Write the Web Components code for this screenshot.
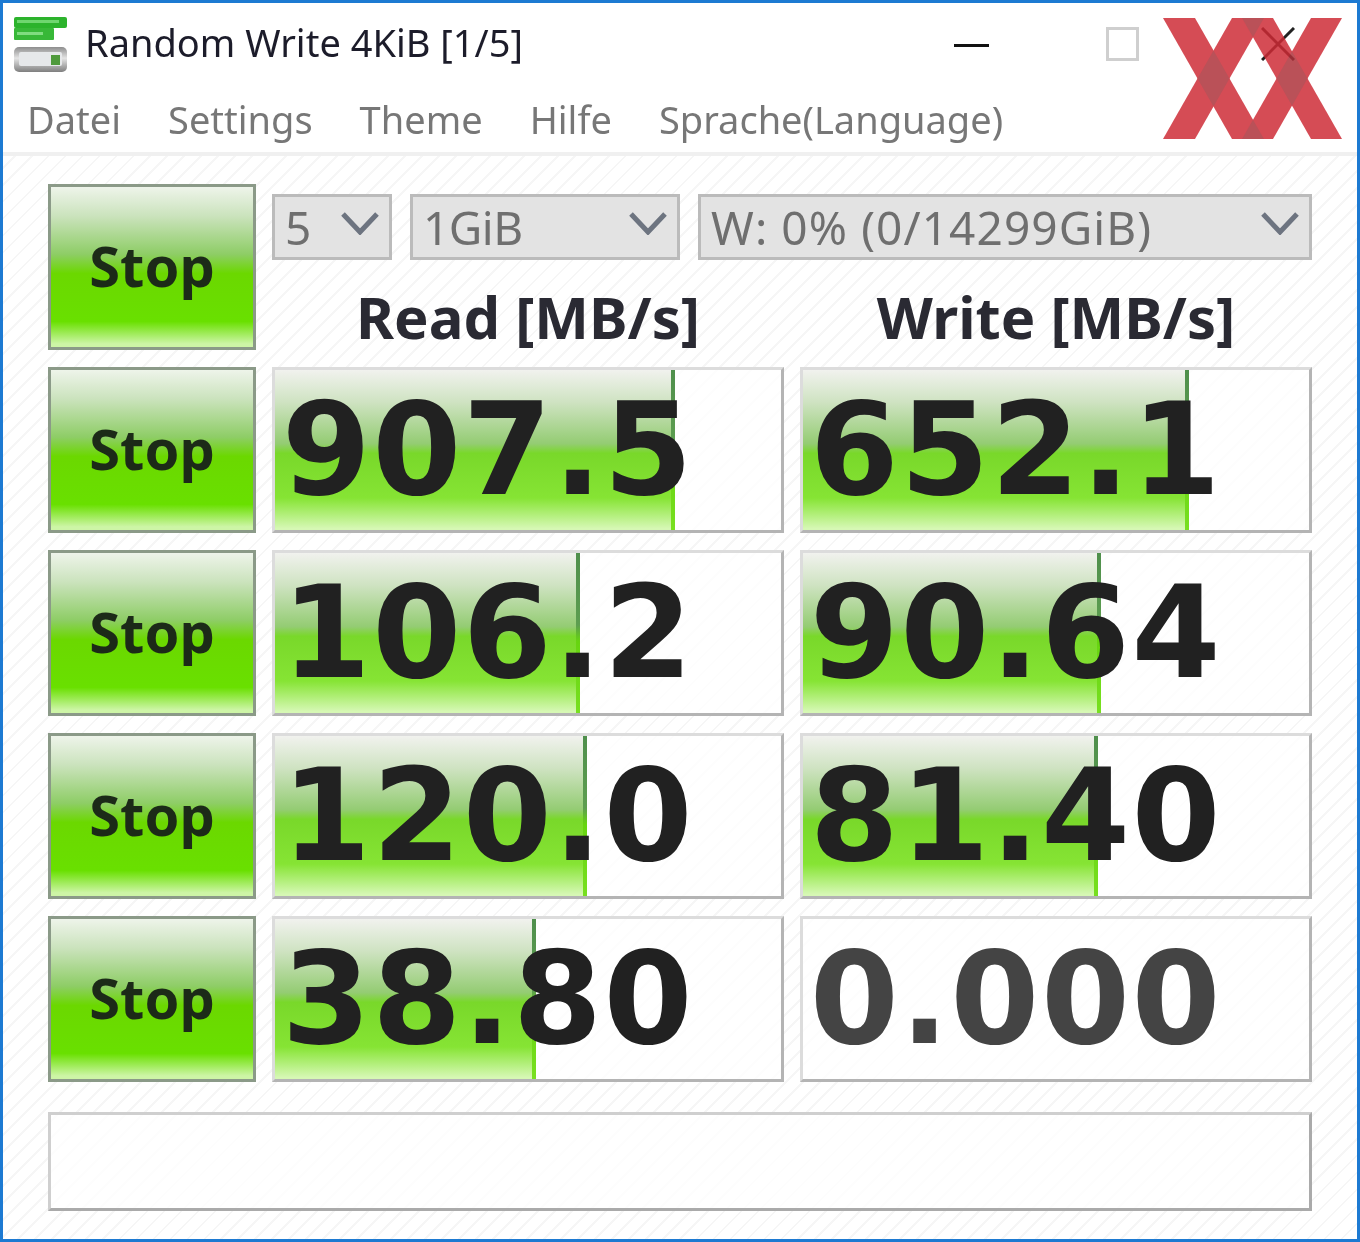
<!DOCTYPE html>
<html>
<head>
<meta charset="utf-8">
<title>Random Write 4KiB [1/5]</title>
<style>
  html, body { margin: 0; padding: 0; background: #fff; }
</style>
</head>
<body>
<cdm-window>
  <cdm-titlebar slot="title" text="Random Write 4KiB [1/5]"></cdm-titlebar>
  <cdm-menubar slot="menu">
    <span>Datei</span><span>Settings</span><span>Theme</span><span>Hilfe</span><span>Sprache(Language)</span>
  </cdm-menubar>

  <cdm-stop></cdm-stop>
  <cdm-controls>
    <cdm-combo width="120" text="5"></cdm-combo>
    <cdm-combo width="270" text="1GiB" style="letter-spacing:-.5px"></cdm-combo>
    <cdm-combo width="614" text="W: 0% (0/14299GiB)" style="letter-spacing:1.1px"></cdm-combo>
  </cdm-controls>

  <cdm-stop></cdm-stop>
  <cdm-score value="907.5" fill="400"></cdm-score>
  <cdm-score value="652.1" fill="386"></cdm-score>

  <cdm-stop></cdm-stop>
  <cdm-score value="106.2" fill="305"></cdm-score>
  <cdm-score value="90.64" fill="298"></cdm-score>

  <cdm-stop></cdm-stop>
  <cdm-score value="120.0" fill="312"></cdm-score>
  <cdm-score value="81.40" fill="295"></cdm-score>

  <cdm-stop></cdm-stop>
  <cdm-score value="38.80" fill="261"></cdm-score>
  <cdm-score value="0.000" fill="0" idle></cdm-score>

  <cdm-comment></cdm-comment>
</cdm-window>

<script>
const windowTemplate = document.createElement('template')
windowTemplate.innerHTML = `
<style>
  :host {
    display: block;
    width: 1360px;
    height: 1242px;
    box-sizing: border-box;
    border: 3px solid #1d7ad2;
    background: #fff;
    position: relative;
    overflow: hidden;
    font-family: "Noto Sans", sans-serif;
    filter: blur(0.6px);
  }
  .panel {
    height: 1083px;
    box-sizing: border-box;
    padding: 28px 45px 0;
    background: repeating-linear-gradient(-45deg, #fff 0 10px, #f6f6f6 10px 12px);
    display: grid;
    grid-template-columns: 208px 512px 512px;
    grid-auto-rows: 166px;
    column-gap: 16px;
    row-gap: 17px;
  }
  .logo {
    position: absolute;
    left: 1160px;
    top: 15px;
  }
</style>
<slot name="title"></slot>
<slot name="menu"></slot>
<div class="panel"><slot></slot></div>
<svg class="logo" width="179" height="121" viewBox="1163 18 179 121">
  <g opacity=".84">
    <g fill="#ce2a35">
      <polygon points="1163,18 1195,18 1264,139 1232,139"/>
      <polygon points="1232,18 1264,18 1195,139 1163,139"/>
      <polygon points="1242,18 1273,18 1342,139 1311,139"/>
      <polygon points="1311,18 1342,18 1273,139 1242,139"/>
    </g>
    <g fill="#ae3039">
      <polygon points="1213.5,50.4 1229.5,78.5 1213.5,106.6 1197.5,78.5"/>
      <polygon points="1292,51.3 1307.5,78.5 1292,105.7 1276.5,78.5"/>
      <polygon points="1242,18 1264,18 1253,37.3"/>
      <polygon points="1242,139 1264,139 1253,119.7"/>
    </g>
  </g>
</svg>
`
customElements.define('cdm-window', class extends HTMLElement {
  constructor () {
    super()
    this.attachShadow({ mode: 'open' })
    this.shadowRoot.appendChild(windowTemplate.content.cloneNode(true))
  }
})

const titleTemplate = document.createElement('template')
titleTemplate.innerHTML = `
<style>
  :host {
    display: flex;
    align-items: flex-start;
    height: 73px;
    box-sizing: border-box;
    padding-left: 11px;
    font-size: 38px;
    color: #1c1c2a;
  }
  .icon { flex: none; margin: 14px 17px 0 0; }
  .text { flex: 1; white-space: nowrap; line-height: 54px; margin-top: 12px; }
  .ctl { flex: none; display: block; }
  .min { margin: 41px 117px 0 0; }
  .max { margin: 24px 122px 0 0; }
  .close { margin: 24px 62px 0 0; }
</style>
<svg class="icon" width="54" height="56" viewBox="0 0 54 56">
  <defs>
    <linearGradient id="drive" x1="0" y1="0" x2="0" y2="1">
      <stop offset="0" stop-color="#8d8d8d"/>
      <stop offset=".45" stop-color="#e4e4e4"/>
      <stop offset="1" stop-color="#7f7f7f"/>
    </linearGradient>
  </defs>
  <rect x="0" y="0" width="53" height="11" rx="2" fill="#2cb32c"/>
  <rect x="3" y="3" width="42" height="3" fill="#6fd66f"/>
  <rect x="0" y="11" width="40" height="12" rx="1" fill="#38b838"/>
  <rect x="3" y="15" width="26" height="3" fill="#80dc80"/>
  <rect x="0" y="30" width="53" height="25" rx="5" fill="url(#drive)"/>
  <rect x="5" y="35" width="43" height="14" rx="2" fill="#e6e8ea"/>
  <rect x="37" y="38" width="9" height="10" fill="#4f9a3c"/>
</svg>
<span class="text"></span>
<svg class="ctl min" width="35" height="4"><rect width="35" height="3" fill="#111"/></svg>
<svg class="ctl max" width="33" height="34"><rect x="1.5" y="1.5" width="30" height="31" fill="none" stroke="#cfcfcf" stroke-width="3"/></svg>
<svg class="ctl close" width="34" height="34"><path d="M1 1 33 33M33 1 1 33" fill="none" stroke="#222" stroke-width="3"/></svg>
`
customElements.define('cdm-titlebar', class extends HTMLElement {
  constructor () {
    super()
    this.attachShadow({ mode: 'open' })
    this.shadowRoot.appendChild(titleTemplate.content.cloneNode(true))
    this.shadowRoot.querySelector('.text').textContent = this.getAttribute('text')
  }
})

const menuTemplate = document.createElement('template')
menuTemplate.innerHTML = `
<style>
  :host {
    display: flex;
    align-items: center;
    height: 80px;
    box-sizing: border-box;
    padding: 10px 0 0 24px;
    gap: 47px;
    font-size: 38px;
    color: #777;
    border-bottom: 4px solid #f0f0f0;
  }
</style>
<slot></slot>
`
customElements.define('cdm-menubar', class extends HTMLElement {
  constructor () {
    super()
    this.attachShadow({ mode: 'open' })
    this.shadowRoot.appendChild(menuTemplate.content.cloneNode(true))
  }
})

const stopTemplate = document.createElement('template')
stopTemplate.innerHTML = `
<style>
  :host {
    display: flex;
    align-items: center;
    justify-content: center;
    box-sizing: border-box;
    border: 3px solid #8b9a88;
    background: linear-gradient(#eef4ea 0%, #cbe3bd 18%, #8ecd66 42%, #6bd800 54%, #69e000 84%, #cdf5a6 98%);
    font-size: 56px;
    font-weight: 700;
    color: #1c2a18;
    padding-bottom: 4px;
  }
</style>
<span>Stop</span>
`
customElements.define('cdm-stop', class extends HTMLElement {
  constructor () {
    super()
    this.attachShadow({ mode: 'open' })
    this.shadowRoot.appendChild(stopTemplate.content.cloneNode(true))
  }
})

const controlsTemplate = document.createElement('template')
controlsTemplate.innerHTML = `
<style>
  :host {
    grid-column: 2 / 4;
    display: grid;
    grid-template-columns: 512px 512px;
    grid-template-rows: auto 1fr;
    column-gap: 16px;
    padding-top: 10px;
    box-sizing: border-box;
    min-width: 0;
  }
  .combos { grid-column: 1 / 3; display: flex; gap: 18px; }
  h2 {
    margin: 0;
    text-align: center;
    font-size: 58px;
    line-height: 60px;
    font-weight: 700;
    color: #2a2a33;
    padding-top: 27px;
    white-space: nowrap;
  }
</style>
<div class="combos"><slot></slot></div>
<h2>Read [MB/s]</h2>
<h2>Write [MB/s]</h2>
`
customElements.define('cdm-controls', class extends HTMLElement {
  constructor () {
    super()
    this.attachShadow({ mode: 'open' })
    this.shadowRoot.appendChild(controlsTemplate.content.cloneNode(true))
  }
})

const comboTemplate = document.createElement('template')
comboTemplate.innerHTML = `
<style>
  :host {
    display: flex;
    align-items: center;
    justify-content: space-between;
    height: 66px;
    box-sizing: border-box;
    border: 3px solid #bbb;
    background: #e3e3e3;
    padding: 0 10px 0 10px;
    font-size: 46px;
    color: #6f6f6f;
    white-space: nowrap;
    flex: none;
  }
  svg { flex: none; margin-top: -8px; }
</style>
<span class="text"></span>
<svg width="38" height="24" viewBox="0 0 38 24"><path d="M2 3 19 21 36 3" fill="none" stroke="#6d7480" stroke-width="5"/></svg>
`
customElements.define('cdm-combo', class extends HTMLElement {
  constructor () {
    super()
    this.attachShadow({ mode: 'open' })
    this.shadowRoot.appendChild(comboTemplate.content.cloneNode(true))
    this.shadowRoot.querySelector('.text').textContent = this.getAttribute('text')
    this.style.width = this.getAttribute('width') + 'px'
  }
})

const scoreTemplate = document.createElement('template')
scoreTemplate.innerHTML = `
<style>
  :host {
    display: grid;
    box-sizing: border-box;
    border: 3px solid;
    border-color: #dcdcdc #b4b4b4 #b4b4b4 #dcdcdc;
    background: rgba(255, 255, 255, .8);
    overflow: hidden;
  }
  .bar, .value { grid-area: 1 / 1; }
  .bar {
    box-sizing: border-box;
    width: var(--fill, 0);
    background: linear-gradient(#f1f2ee 0%, #cfe3c2 20%, #94cc73 46%, #79d82a 52%, #86e434 80%, #d6f8b4 99%);
    border-right: 4px solid;
    border-image: linear-gradient(#4f8f4c 0%, #5d9e50 45%, #67d410 55%, #78e020 100%) 1;
  }
  :host([idle]) .bar { display: none; }
  .value {
    align-self: center;
    justify-self: end;
    padding-right: 87px;
    font-family: "DejaVu Sans", sans-serif;
    font-weight: 700;
    font-size: 128px;
    letter-spacing: 1.5px;
    line-height: 1;
    color: #212121;
  }
  :host([idle]) .value { color: #444; }
</style>
<div class="bar"></div>
<span class="value"></span>
`
customElements.define('cdm-score', class extends HTMLElement {
  constructor () {
    super()
    this.attachShadow({ mode: 'open' })
    this.shadowRoot.appendChild(scoreTemplate.content.cloneNode(true))
    this.shadowRoot.querySelector('.value').textContent = this.getAttribute('value')
    this.style.setProperty('--fill', this.getAttribute('fill') + 'px')
  }
})

const commentTemplate = document.createElement('template')
commentTemplate.innerHTML = `
<style>
  :host {
    grid-column: 1 / 4;
    display: block;
    height: 99px;
    margin-top: 13px;
    box-sizing: border-box;
    border: 3px solid;
    border-color: #cfcfcf #aaa #aaa #cfcfcf;
    background: rgba(255, 255, 255, .8);
  }
</style>
`
customElements.define('cdm-comment', class extends HTMLElement {
  constructor () {
    super()
    this.attachShadow({ mode: 'open' })
    this.shadowRoot.appendChild(commentTemplate.content.cloneNode(true))
  }
})
</script>
</body>
</html>
